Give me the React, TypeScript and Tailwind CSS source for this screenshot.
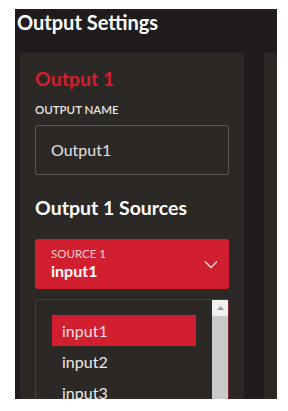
import React from "react";

export default function App() {
  const font = { fontFamily: "Lato, 'Open Sans', sans-serif" };
  return (
    <div className="relative w-[288px] h-[411px] bg-white overflow-hidden" style={font}>
      <div className="absolute left-[133px] top-[-19px] text-[17px] font-bold text-[#111] leading-[20px]">Output Settings</div>
      <div className="absolute left-[15px] top-[9px] w-[262px] h-[390px] bg-[#201c1d] overflow-hidden">
        <div className="pl-[2px] pt-[1px] text-[20px] font-bold text-white leading-[25px]">Output Settings</div>
        <div className="flex mt-[18px] ml-[5px] gap-[20px]">
          <div className="w-[224px] shrink-0 h-[400px] bg-[#2b2825] pl-[15px] pt-[15px]">
            <div className="text-[19.5px] font-bold text-[#d31f30] leading-[22px]">Output 1</div>
            <div className="mt-[13px] text-[11.5px] font-semibold text-[#e8e4e0] leading-[14px]">OUTPUT NAME</div>
            <div className="mt-[8px] w-[194px] h-[50px] border border-[#5f5b58] rounded-[3px] flex items-center pl-[15px] text-[16px] text-[#e6e2de]">Output1</div>
            <div className="mt-[21px] text-[19.5px] font-bold text-white leading-[24px]">Output 1 Sources</div>
            <div className="mt-[19px] w-[194px] h-[50px] bg-[#d11f2f] rounded-[3px] flex items-center justify-between pl-[16px] pr-[11px]">
              <div>
                <div className="text-[11.5px] text-[#f5cfd3] leading-[13px]">SOURCE 1</div>
                <div className="text-[16px] font-bold text-white leading-[20px] mt-[1px]">input1</div>
              </div>
              <svg width="14" height="9" viewBox="0 0 14 9" fill="none" stroke="#f7e1e3" strokeWidth="1.4">
                <path d="M1 1.5 L7 7.5 L13 1.5" />
              </svg>
            </div>
            <div className="mt-[10px] w-[194px] h-[120px] border border-[#7e2531] rounded-t-[2px] flex">
              <div className="flex-1 pt-[15px] pl-[16px]">
                <div className="w-[144px] h-[31px] bg-[#d11f2f] flex items-center pl-[10px] text-[16px] text-[#f3dfe1]">input1</div>
                <div className="h-[31px] flex items-center pl-[10px] text-[16px] text-[#ece8e4]">input2</div>
                <div className="h-[31px] flex items-center pl-[10px] text-[16px] text-[#ece8e4]">input3</div>
              </div>
              <div className="w-[16px] bg-[#c9c9c7] flex flex-col">
                <div className="h-[16px] bg-[#f1f1f0] flex items-center justify-center">
                  <svg width="7" height="4" viewBox="0 0 7 4"><path d="M0 4 L3.5 0 L7 4 Z" fill="#9a9a9a" /></svg>
                </div>
              </div>
            </div>
          </div>
          <div className="flex-1 h-[400px] bg-[#2b2825]" />
        </div>
      </div>
    </div>
  );
}
